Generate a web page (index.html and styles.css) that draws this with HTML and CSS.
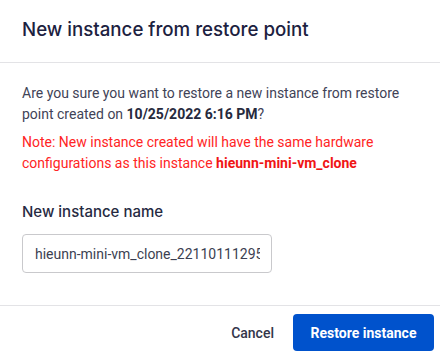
FILE: index.html
```html
<!DOCTYPE html>
<html lang="en">
<head>
<meta charset="utf-8">
<title>New instance from restore point</title>
<link rel="stylesheet" href="styles.css">
</head>
<body>
<div class="modal">
  <header class="modal-header">
    <h1 class="modal-title">New instance from restore point</h1>
  </header>
  <section class="modal-body">
    <p class="message">Are you sure you want to restore a new instance from restore point created on <strong>10/25/2022 6:16 PM</strong>?</p>
    <p class="note">Note: New instance created will have the same hardware configurations as this instance <strong>hieunn-mini-vm_clone</strong></p>
    <div class="field">
      <label class="field-label" for="name">New instance name</label>
      <input class="field-input" id="name" type="text" value="hieunn-mini-vm_clone_221101112957">
    </div>
  </section>
  <footer class="modal-footer">
    <button class="btn btn-cancel" type="button">Cancel</button>
    <button class="btn btn-primary" type="button">Restore instance</button>
  </footer>
</div>
</body>
</html>
```

FILE: styles.css
```css
html, body {
  margin: 0;
  padding: 0;
  background: #ffffff;
}

body {
  font-family: Roboto, "Liberation Sans", sans-serif;
  width: 440px;
  height: 357px;
  overflow: hidden;
}

.modal {
  display: flex;
  flex-direction: column;
}

.modal-header {
  padding: 18px 22px 20px;
  border-bottom: 1px solid #e3e3e6;
}

.modal-title {
  margin: 0;
  font-family: Inter, "Noto Sans", sans-serif;
  font-size: 18.7px;
  line-height: 24px;
  font-weight: 500;
  color: #1c2140;
}

.modal-body {
  padding: 20px 22px 32px;
}

.message,
.note {
  margin: 0;
  font-size: 14px;
  line-height: 21px;
}

.message {
  color: #414357;
}

.message strong {
  color: #262a3d;
  font-weight: 700;
}

.note {
  margin-top: 7px;
  color: #ff2424;
}

.note strong {
  font-weight: 700;
  color: #f01515;
}

.field {
  display: flex;
  flex-direction: column;
  align-items: flex-start;
  margin-top: 28px;
}

.field-label {
  font-family: Inter, "Noto Sans", sans-serif;
  font-size: 15px;
  line-height: 20px;
  font-weight: 500;
  color: #262a42;
}

.field-input {
  box-sizing: border-box;
  margin-top: 12px;
  width: 250px;
  height: 39px;
  padding: 0 11px 0 12px;
  border: 1px solid #c9c9cc;
  border-radius: 4px;
  font-family: Roboto, "Liberation Sans", sans-serif;
  font-size: 14px;
  color: #3c3f52;
  background: #fff;
  outline: none;
}

.modal-footer {
  display: flex;
  justify-content: flex-end;
  align-items: center;
  padding: 8px 6px 6px;
  border-top: 1px solid #e3e3e6;
}

.btn {
  font-family: Roboto, "Liberation Sans", sans-serif;
  font-size: 14px;
  border: none;
  cursor: pointer;
}

.btn-cancel {
  background: transparent;
  color: #33364a;
  font-weight: 500;
  padding: 0;
  margin-right: 19px;
}

.btn-primary {
  height: 37px;
  width: 141px;
  padding: 0;
  border-radius: 4px;
  background: #0052cc;
  color: #ffffff;
  font-weight: 700;
}
```
